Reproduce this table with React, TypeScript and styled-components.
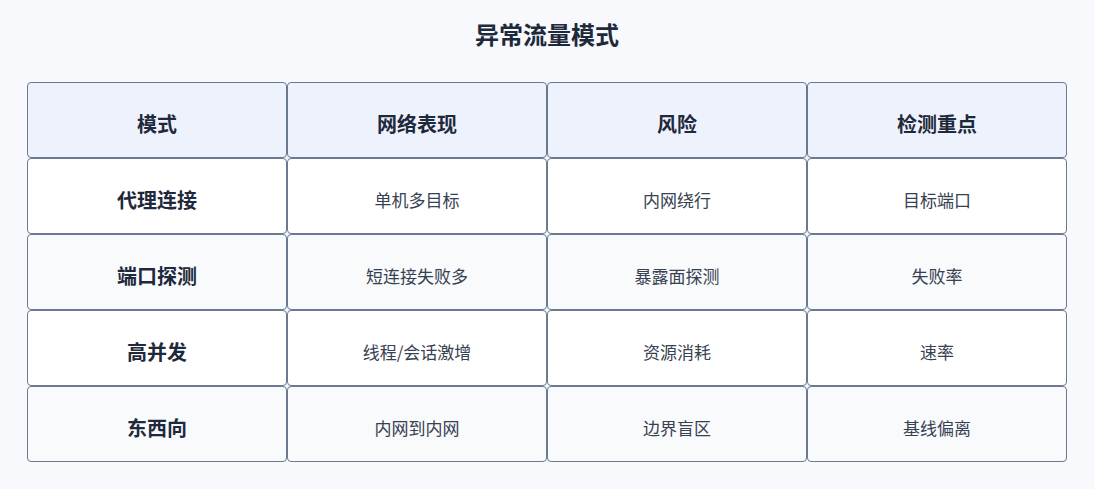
import React, { FC } from 'react';
import styled, { createGlobalStyle } from 'styled-components';

const GlobalStyle = createGlobalStyle`
	html, body {
		margin: 0;
		padding: 0;
		background: #f7f9fc;
		font-family: "Noto Sans CJK SC", "Noto Sans", sans-serif;
	}
`;

const Page = styled.main`
	width: 1094px;
	height: 489px;
	box-sizing: border-box;
	padding: 15px 27px 0;
`;

const Title = styled.h1`
	margin: 0 0 29px;
	height: 38px;
	line-height: 38px;
	text-align: center;
	font-size: 24px;
	font-weight: 700;
	color: #1e293b;
`;

const Grid = styled.div`
	display: grid;
	grid-template-columns: repeat(4, 260px);
	grid-auto-rows: 76px;
`;

type Kind = 'head' | 'odd' | 'even';

const Cell = styled.div<{ $kind: Kind; $strong?: boolean }>`
	display: flex;
	align-items: center;
	justify-content: center;
	box-sizing: border-box;
	padding-top: 7px;
	border: 1px solid #6b7a90;
	border-radius: 4px;
	background: ${(p) => (p.$kind === 'head' ? '#eef2fd' : p.$kind === 'odd' ? '#ffffff' : '#f8fafc')};
	font-size: ${(p) => (p.$strong ? '20px' : '17px')};
	font-weight: ${(p) => (p.$strong ? 700 : 400)};
	color: ${(p) => (p.$strong ? '#1e293b' : '#374151')};
`;

const headers = ['模式', '网络表现', '风险', '检测重点'];

const rows = [
	['代理连接', '单机多目标', '内网绕行', '目标端口'],
	['端口探测', '短连接失败多', '暴露面探测', '失败率'],
	['高并发', '线程/会话激增', '资源消耗', '速率'],
	['东西向', '内网到内网', '边界盲区', '基线偏离'],
];

const App: FC = () => {
	return (
		<>
			<GlobalStyle />
			<Page>
				<Title>异常流量模式</Title>
				<Grid>
					{headers.map((h) => (
						<Cell key={h} $kind="head" $strong>
							{h}
						</Cell>
					))}
					{rows.map((row, i) =>
						row.map((text, j) => (
							<Cell key={`${i}-${j}`} $kind={i % 2 === 0 ? 'odd' : 'even'} $strong={j === 0}>
								{text}
							</Cell>
						))
					)}
				</Grid>
			</Page>
		</>
	);
};

export default App;
